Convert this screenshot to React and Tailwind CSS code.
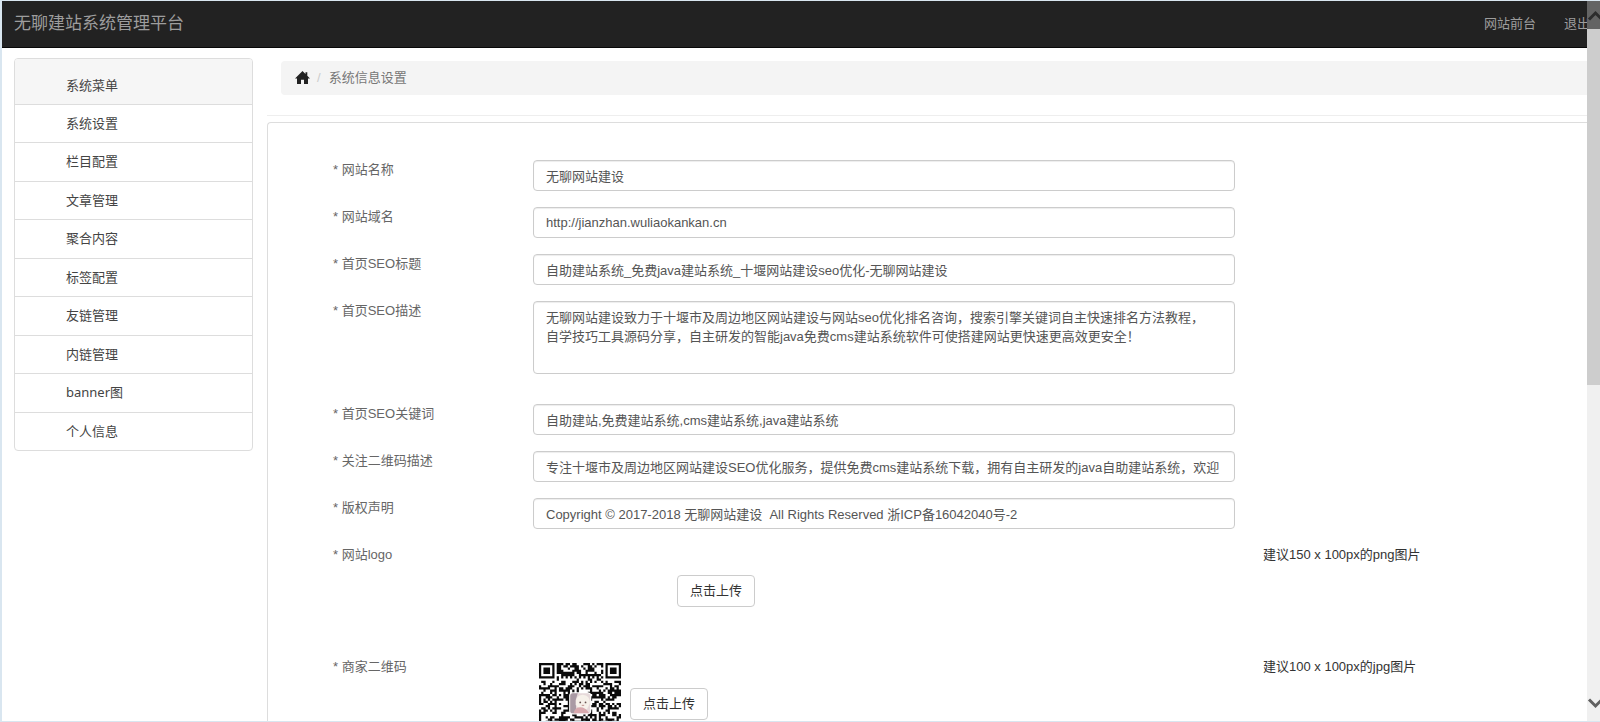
import React from "react";

const menu = ["系统设置", "栏目配置", "文章管理", "聚合内容", "标签配置", "友链管理", "内链管理", "banner图", "个人信息"];

const inputClass =
  "block w-full h-[31px] rounded-[4px] border border-[#ccc] bg-white px-3 pb-px text-[13px] text-[#555] shadow-[inset_0_1px_1px_rgba(0,0,0,0.075)] outline-none";

function Row({ id, label, hint, className = "", children }) {
  return (
    <div className={`grid grid-cols-[200px_minmax(0,1fr)_352px] ${className}`}>
      <label htmlFor={id} className="h-5 text-[#666] leading-5">* {label}</label>
      <div>{children}</div>
      <div className="pl-7 leading-5 text-[#333]">{hint}</div>
    </div>
  );
}

function TextRow({ id, label, value }) {
  return (
    <Row id={id} label={label} className="mb-4">
      <input id={id} type="text" defaultValue={value} className={inputClass} />
    </Row>
  );
}

function UploadButton({ id }) {
  return (
    <button id={id} type="button" className="h-8 rounded-[4px] border border-[#ccc] bg-white px-3 text-[13px] text-[#333]">
      点击上传
    </button>
  );
}

const SIZE = 37;

function finder(x, y) {
  const d = Math.max(Math.abs(x - 3), Math.abs(y - 3));
  return d === 3 || d <= 1;
}

function moduleOn(x, y) {
  const farX = SIZE - 1 - x;
  const farY = SIZE - 1 - y;
  if (x < 8 && y < 8) return x < 7 && y < 7 && finder(x, y);
  if (farX < 8 && y < 8) return farX < 7 && y < 7 && finder(farX, y);
  if (x < 8 && farY < 8) return x < 7 && farY < 7 && finder(x, farY);
  if (Math.abs(x - 30) <= 2 && Math.abs(y - 30) <= 2) return Math.max(Math.abs(x - 30), Math.abs(y - 30)) !== 1;
  if (y === 6) return x % 2 === 0;
  if (x === 6) return y % 2 === 0;
  let h = Math.imul(x + 11, 374761393) ^ Math.imul(y + 7, 668265263);
  h = Math.imul(h ^ (h >>> 13), 1274126177);
  return ((h ^ (h >>> 16)) & 255) < 134;
}

let qrPath = "";
for (let y = 0; y < SIZE; y++) {
  for (let x = 0; x < SIZE; x++) {
    if (moduleOn(x, y)) qrPath += `M${x} ${y}h1v1h-1z`;
  }
}

function QrCode() {
  return (
    <svg role="img" aria-label="商家二维码" width="94" height="94" viewBox="-2.7 -2.7 42.4 42.4" className="shrink-0">
      <path d={qrPath} fill="#0b0b0b" />
      <rect x="13.6" y="13.2" width="10" height="10" rx="1.6" fill="#fff" />
      <rect x="14.1" y="13.7" width="9" height="9" rx="1.2" fill="#e6d9da" />
      <path d="M14.1 14.9q0-1.2 1.2-1.2h2.2l-1 3.2.4 5.8h-1.600q-1.200 0-1.200-1.200z" fill="#a99aa4" />
      <path d="M16.600 18.600q-.4-4 3.100-4.300 3.500.2 3.200 4l-1.200 2.400-3.600.3z" fill="#f6f1ea" />
      <path d="M15.600 22.700q.6-2.700 3-2.700t4 2.700z" fill="#d8a9ae" />
      <circle cx="18.600" cy="17.800" r=".4" fill="#6b5552" />
      <circle cx="21" cy="17.800" r=".4" fill="#6b5552" />
      <path d="M19.300 19.100h1.100" stroke="#b98784" strokeWidth=".4" />
    </svg>
  );
}

function Scrollbar() {
  return (
    <div aria-hidden="true" className="flex w-[13px] shrink-0 flex-col overflow-hidden bg-[#f0f0f0]">
      <div className="flex h-7 shrink-0 items-center bg-[#646464]">
        <svg width="18" height="16" viewBox="0 0 18 16" className="shrink-0">
          <path d="M2 12.500 8.500 6 15 12.500" fill="none" stroke="#2c2c2c" strokeWidth="3" />
        </svg>
      </div>
      <div className="h-[49.500%] bg-[#cdcdcd]" />
      <div className="mt-auto flex h-9 items-center">
        <svg width="18" height="12" viewBox="0 0 18 12" className="shrink-0">
          <path d="M2 2.500 8.500 9 15 2.500" fill="none" stroke="#606060" strokeWidth="3" />
        </svg>
      </div>
    </div>
  );
}

export default function App() {
  return (
    <div className="flex h-screen overflow-hidden border-y border-l-2 border-[#d9e6f0] bg-white font-['Liberation_Sans','Noto_Sans_CJK_SC',sans-serif] text-[13px] text-[#333]">
      <div className="min-w-0 flex-1">
        <header className="flex h-[47px] items-center justify-between border-b border-[#080808] bg-[#222] pl-3 text-[#9d9d9d]">
          <a href="#" className="text-[17px]">无聊建站系统管理平台</a>
          <nav className="-mr-[3px] flex gap-7">
            <a href="#">网站前台</a>
            <a href="#">退出</a>
          </nav>
        </header>

        <div className="flex items-start">
          <aside className="ml-3 mt-[10px] w-[239px] shrink-0 rounded-[4px] border border-[#ddd] font-['Noto_Sans','Noto_Sans_CJK_SC',sans-serif] text-[#444]">
            <h2 className="flex h-[45px] items-center rounded-t-[3px] bg-[#f6f6f6] pl-[51px] pt-2">系统菜单</h2>
            <ul className="grid h-[346px] auto-rows-fr">
              {menu.map((item) => (
                <li key={item} className="border-t border-[#ddd]">
                  <a href="#" className="flex h-full items-center pl-[51px]">{item}</a>
                </li>
              ))}
            </ul>
          </aside>

          <main className="ml-[14px] min-w-0 flex-1">
            <nav aria-label="breadcrumb" className="ml-[14px] mt-[13px] flex h-[34px] items-center rounded-l-[4px] bg-[#f4f4f4] pl-[14px]">
              <a href="#" aria-label="首页">
                <svg width="15" height="14" viewBox="0 0 15 14" fill="#222">
                  <path d="M7.500 0 0 7.400h2V13h4V8.800h3V13h4V7.400h2L12.300 4.700V1.200h-1.800v1.700z" />
                </svg>
              </a>
              <span className="pl-[7px] pr-2 text-[#ccc]">/</span>
              <span className="text-[#777]">系统信息设置</span>
            </nav>
            <hr className="mt-5 border-[#eee]" />

            <form className="mt-[6px] rounded-tl-[4px] border-l border-t border-[#ddd] pl-[65px] pt-[37px]">
              <TextRow id="name" label="网站名称" value="无聊网站建设" />
              <TextRow id="domain" label="网站域名" value="http://jianzhan.wuliaokankan.cn" />
              <TextRow id="title" label="首页SEO标题" value="自助建站系统_免费java建站系统_十堰网站建设seo优化-无聊网站建设" />
              <Row id="desc" label="首页SEO描述" className="mb-[30px]">
                <textarea
                  id="desc"
                  className="block h-[73px] w-full resize-none rounded-[4px] border border-[#ccc] bg-white py-[6px] pl-3 pr-6 text-[13px] leading-[19px] text-[#555] shadow-[inset_0_1px_1px_rgba(0,0,0,0.075)] outline-none"
                  defaultValue="无聊网站建设致力于十堰市及周边地区网站建设与网站seo优化排名咨询，搜索引擎关键词自主快速排名方法教程，自学技巧工具源码分享，自主研发的智能java免费cms建站系统软件可使搭建网站更快速更高效更安全！"
                />
              </Row>
              <TextRow id="keywords" label="首页SEO关键词" value="自助建站,免费建站系统,cms建站系统,java建站系统" />
              <TextRow id="qrdesc" label="关注二维码描述" value="专注十堰市及周边地区网站建设SEO优化服务，提供免费cms建站系统下载，拥有自主研发的java自助建站系统，欢迎" />
              <TextRow id="copyright" label="版权声明" value="Copyright © 2017-2018 无聊网站建设  All Rights Reserved 浙ICP备16042040号-2" />
              <Row id="logo" label="网站logo" hint="建议150 x 100px的png图片" className="h-[112px]">
                <div className="pl-36 pt-[30px]">
                  <UploadButton id="logo" />
                </div>
              </Row>
              <Row id="qr" label="商家二维码" hint="建议100 x 100px的jpg图片">
                <div className="flex items-center gap-[3px]">
                  <QrCode />
                  <UploadButton id="qr" />
                </div>
              </Row>
            </form>
          </main>
        </div>
      </div>
      <Scrollbar />
    </div>
  );
}
